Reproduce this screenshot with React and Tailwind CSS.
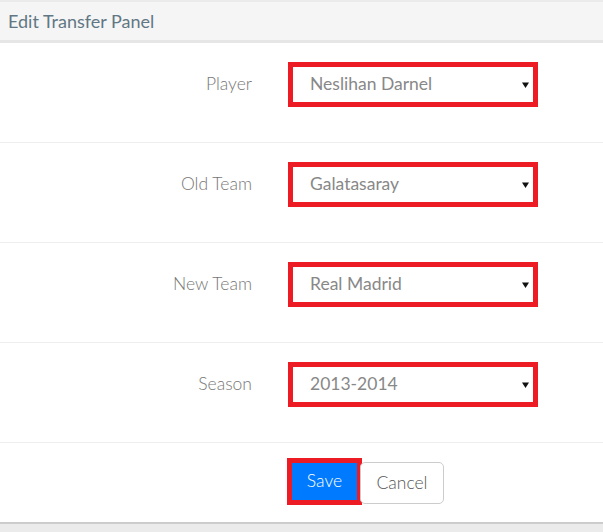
const rows = [
  { label: 'Player', value: 'Neslihan Darnel' },
  { label: 'Old Team', value: 'Galatasaray' },
  { label: 'New Team', value: 'Real Madrid' },
  { label: 'Season', value: '2013-2014' },
];

const Caret = () => (
  <svg width="7" height="6" viewBox="0 0 7 6" className="shrink-0">
    <path d="M0 0.5h7L3.5 6z" fill="#111" />
  </svg>
);

const FieldRow = ({ label, value }) => (
  <div className="flex h-[100px] border-b border-[#eeeeee] pt-[19px]">
    <div className="w-[252px] h-[45px] flex items-center justify-end text-[17.5px] font-light text-[#777]">
      {label}
    </div>
    <div className="ml-[36px] w-[250px] h-[45px] border-[5px] border-[#ed1c24] bg-white flex items-center justify-between pl-[17px] pr-[4px]">
      <span className="text-[17.5px] text-[#888]">{value}</span>
      <Caret />
    </div>
  </div>
);

export default function App() {
  return (
    <div className="w-[603px] h-[532px] bg-white flex flex-col font-['Lato','Liberation_Sans',sans-serif]">
      {/* header */}
      <div className="h-[43px] shrink-0 bg-[#f5f5f5] border-t-2 border-[#ebebeb] border-b-[3px] border-b-[#e6e6e6] px-2 flex items-center">
        <span className="text-[18px] text-[#617784]">Edit Transfer Panel</span>
      </div>

      {rows.map((r) => (
        <FieldRow key={r.label} label={r.label} value={r.value} />
      ))}

      {/* buttons */}
      <div className="h-[79px] shrink-0 flex items-start pt-[15px] pl-[287px]">
        <button className="w-[75px] h-[47px] border-[5px] border-[#ed1c24] bg-[#007bff] text-white text-[17.5px] font-light flex items-center justify-center">
          Save
        </button>
        <button className="w-[84px] h-[42px] mt-[4px] -ml-[2px] border border-[#cccccc] rounded-[5px] bg-white text-[#555] text-[17.5px] font-light flex items-center justify-center">
          Cancel
        </button>
      </div>

      {/* bottom edge */}
      <div className="flex-1 border-t-2 border-[#cccccc] bg-[#ebebeb]" />
    </div>
  );
}
